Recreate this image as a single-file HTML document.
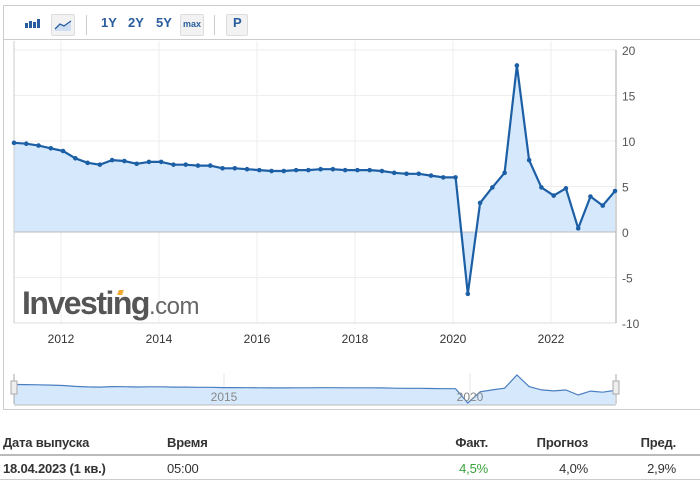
<!DOCTYPE html>
<html><head><meta charset="utf-8"><style>
body{margin:0;width:700px;height:483px;background:#fff;overflow:hidden;font-family:"Liberation Sans",Arial,sans-serif;position:relative}
.frame{position:absolute;left:3px;top:5px;width:700px;height:405px;border:1px solid #ccc;border-right:none;box-sizing:border-box}
.tb{position:absolute;left:0;top:0;width:700px;height:33px;border-bottom:1px solid #ccc}
.btn{position:absolute;top:9px;font-size:13px;font-weight:bold;color:#2a5d9f}
.box{position:absolute;top:8px;height:22px;border:1px solid #ddd;background:#f2f2f2;border-radius:2px;box-sizing:border-box}
.sep{position:absolute;top:9px;width:1px;height:20px;background:#ccc}
.t{position:absolute;font-size:13px;font-weight:bold;color:#333;letter-spacing:-0.2px}
.r{text-align:right}
</style></head><body>
<div class="frame">
 <div class="tb">
  <svg style="position:absolute;left:20px;top:11px" width="18" height="12"><rect x="1" y="6" width="3" height="5" fill="#2a5d9f"/><rect x="5" y="4" width="3" height="7" fill="#2a5d9f"/><rect x="9" y="5" width="3" height="6" fill="#2a5d9f"/><rect x="13" y="2" width="3" height="9" fill="#2a5d9f"/></svg>
  <div class="box" style="left:47px;width:24px"></div>
  <svg style="position:absolute;left:50px;top:12px" width="18" height="14"><path d="M1 11 L6 6 L10 8 L17 3 L17 13 L1 13Z" fill="#cfdff3"/><path d="M1 11 L6 6 L10 8 L17 3" stroke="#2a5d9f" stroke-width="1.3" fill="none"/></svg>
  <div class="sep" style="left:82px"></div>
  <div class="btn" style="left:97px">1Y</div>
  <div class="btn" style="left:124px">2Y</div>
  <div class="btn" style="left:152px">5Y</div>
  <div class="box" style="left:176px;width:24px"></div>
  <div style="position:absolute;left:179px;top:13px;font-size:9px;font-weight:bold;color:#2a5d9f">max</div>
  <div class="sep" style="left:210px"></div>
  <div class="box" style="left:222px;width:22px"></div>
  <div class="btn" style="left:229px">P</div>
 </div>
</div>
<svg id="ch" style="position:absolute;left:0;top:0" width="700" height="420"></svg>
<div style="position:absolute;left:22px;top:285px;font-size:32px;font-weight:bold;color:#555;letter-spacing:-1.5px">Investing<span style="font-weight:normal;font-size:24px;color:#666;letter-spacing:-0.5px">.com</span></div>
<div style="position:absolute;left:118px;top:290px;width:5px;height:5px;background:#f0a830;transform:skewX(-20deg)"></div>
<div class="t" style="left:3px;top:435px">Дата выпуска</div>
<div class="t" style="left:167px;top:435px">Время</div>
<div class="t r" style="left:400px;width:88px;top:435px">Факт.</div>
<div class="t r" style="left:500px;width:88px;top:435px">Прогноз</div>
<div class="t r" style="left:588px;width:88px;top:435px">Пред.</div>
<div style="position:absolute;left:0;top:454px;width:700px;height:2px;background:#bbb"></div>
<div class="t" style="left:3px;top:461px">18.04.2023 (1 кв.)</div>
<div class="t" style="left:167px;top:461px;font-weight:normal">05:00</div>
<div class="t r" style="left:400px;width:88px;top:461px;font-weight:normal;color:#3aa13a">4,5%</div>
<div class="t r" style="left:500px;width:88px;top:461px;font-weight:normal">4,0%</div>
<div class="t r" style="left:588px;width:88px;top:461px;font-weight:normal">2,9%</div>
<div style="position:absolute;left:0;top:479px;width:700px;height:1px;background:#ccc"></div>
<script>
var v=[9.8,9.7,9.5,9.2,8.9,8.1,7.6,7.4,7.9,7.8,7.5,7.7,7.7,7.4,7.4,7.3,7.3,7.0,7.0,6.9,6.8,6.7,6.7,6.8,6.8,6.9,6.9,6.8,6.8,6.8,6.7,6.5,6.4,6.4,6.2,6.0,6.0,-6.8,3.2,4.9,6.5,18.3,7.9,4.9,4.0,4.8,0.4,3.9,2.9,4.5];
var X=i=>14+i*601/49,Y=a=>232-a*9.1,NY=a=>395.4-a*1.115;
var s='';
s+='<rect x="14" y="41" width="602" height="282" fill="#fff"/>';
for(var g=-10;g<=20;g+=5){s+='<line x1="14" x2="616" y1="'+Y(g)+'" y2="'+Y(g)+'" stroke="#eee"/>';
s+='<text x="622" y="'+(Y(g)+5)+'" font-size="12" fill="#555" font-family="Liberation Sans">'+g+'</text>';}
for(var y=0;y<6;y++){var x=61+y*98;s+='<line x1="'+x+'" x2="'+x+'" y1="41" y2="323" stroke="#eee"/>';
s+='<text x="'+x+'" y="343" font-size="12" fill="#333" text-anchor="middle" font-family="Liberation Sans">'+(2012+2*y)+'</text>';}
var p=v.map((a,i)=>X(i).toFixed(1)+','+Y(a).toFixed(1)).join(' ');
s+='<polygon points="14,232 '+p+' 615,232" fill="#d6e8fc"/>';
s+='<line x1="14" x2="616" y1="232" y2="232" stroke="#bbb"/>';
s+='<line x1="14" x2="14" y1="41" y2="323" stroke="#ccc"/><line x1="14" x2="616" y1="323" y2="323" stroke="#ddd"/>';
s+='<line x1="616" x2="616" y1="50" y2="323" stroke="#aaa"/>';
s+='<polyline points="'+p+'" fill="none" stroke="#1c5fa5" stroke-width="2.2" stroke-linejoin="round"/>';
v.forEach((a,i)=>{s+='<circle cx="'+X(i)+'" cy="'+Y(a)+'" r="2.3" fill="#1c5fa5"/>';});
// navigator
var np=v.map((a,i)=>X(i).toFixed(1)+','+NY(a).toFixed(1)).join(' ');
s+='<line x1="224" x2="224" y1="373" y2="405" stroke="#e4e4e4"/><line x1="470" x2="470" y1="373" y2="405" stroke="#e4e4e4"/>';
s+='<polygon points="14,405 '+np+' 615,405" fill="#d6e8fc"/>';
s+='<polyline points="'+np+'" fill="none" stroke="#4a7fbf" stroke-width="1.2"/>';
s+='<line x1="14" x2="616" y1="405" y2="405" stroke="#bbb"/>';
s+='<text x="224" y="401" font-size="12" fill="#888" text-anchor="middle" font-family="Liberation Sans">2015</text>';
s+='<text x="470" y="401" font-size="12" fill="#888" text-anchor="middle" font-family="Liberation Sans">2020</text>';
[11,613].forEach(x=>{s+='<line x1="'+(x+3)+'" x2="'+(x+3)+'" y1="374" y2="404" stroke="#aaa"/><rect x="'+x+'" y="381" width="6" height="13" fill="#eee" stroke="#aaa"/>';});
document.getElementById('ch').innerHTML=s;
</script>
</body></html>
